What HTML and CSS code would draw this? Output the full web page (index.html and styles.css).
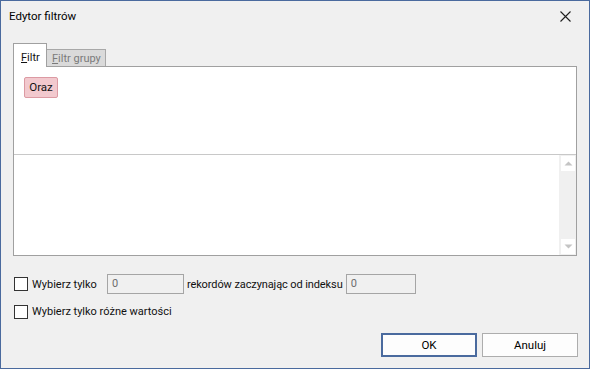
FILE: index.html
```html
<!DOCTYPE html>
<html lang="pl">
<head>
<meta charset="utf-8">
<title>Edytor filtrów</title>
<link rel="stylesheet" href="styles.css">
</head>
<body>
<div class="window">
  <div class="titlebar">
    <span class="title">Edytor filtrów</span>
    <span class="close">
      <svg width="11" height="11" viewBox="0 0 11 11"><path d="M0.5 0.5 L10.5 10.5 M10.5 0.5 L0.5 10.5" stroke="#1f1f1f" stroke-width="1.1" fill="none"/></svg>
    </span>
  </div>
  <div class="content">
    <div class="tabs">
      <div class="tab active"><u>F</u>iltr</div>
      <div class="tab inactive"><u>F</u>iltr grupy</div>
    </div>
    <div class="panel">
      <div class="top-area">
        <span class="chip">Oraz</span>
      </div>
      <div class="bottom-area">
        <div class="list"></div>
        <div class="scrollbar">
          <div class="arrow"><svg width="9" height="5" viewBox="0 0 9 5"><path d="M0.5 4.5 L4.5 0.5 L8.5 4.5 Z" fill="#c4c4c4"/></svg></div>
          <div class="arrow"><svg width="9" height="5" viewBox="0 0 9 5"><path d="M0.5 0.5 L4.5 4.5 L8.5 0.5 Z" fill="#c4c4c4"/></svg></div>
        </div>
      </div>
    </div>
    <div class="options">
      <div class="row row-1">
        <span class="checkbox"></span>
        <span class="label label-1">Wybierz tylko</span>
        <span class="input input-1">0</span>
        <span class="label label-2">rekordów zaczynając od indeksu</span>
        <span class="input input-2">0</span>
      </div>
      <div class="row row-2">
        <span class="checkbox"></span>
        <span class="label">Wybierz tylko różne wartości</span>
      </div>
    </div>
    <div class="buttons">
      <button class="btn default">OK</button>
      <button class="btn">Anuluj</button>
    </div>
  </div>
</div>
</body>
</html>
```
FILE: styles.css
```css
* { box-sizing: border-box; }
html, body { margin: 0; padding: 0; }
body {
  font-family: "Roboto", "Noto Sans", sans-serif;
  font-size: 11px;
  color: #111;
  background: #f0f0f0;
}
.window {
  width: 590px;
  height: 369px;
  border: 1px solid #4a6a9e;
  background: #f0f0f0;
  display: flex;
  flex-direction: column;
}
.titlebar {
  height: 30px;
  display: flex;
  align-items: center;
  justify-content: space-between;
  padding: 0 18px 0 8px;
}
.title { font-size: 11.5px; color: #000; }
.close { display: flex; align-items: center; height: 11px; }
.close svg { display: block; }
.content {
  flex: 1;
  display: flex;
  flex-direction: column;
  padding: 12px 12px 11px 12px;
}
.tabs {
  display: flex;
  align-items: flex-end;
  height: 23px;
}
.tab {
  line-height: 15px;
  white-space: nowrap;
}
.tab.active {
  height: 24px;
  width: 34px;
  padding: 6px 0 0 7px;
  background: #fff;
  border: 1px solid #a0a0a0;
  border-bottom: none;
  position: relative;
  z-index: 1;
  margin-bottom: -1px;
}
.tab.inactive {
  height: 17px;
  width: 59px;
  padding: 1px 0 0 5px;
  background: #dadada;
  border: 1px solid #a8a8a8;
  border-left: none;
  border-bottom: none;
  color: #7a7a7a;
}
.tab u { text-underline-offset: 1px; }
.panel {
  height: 190px;
  border: 1px solid #a0a0a0;
  background: #fff;
  display: flex;
  flex-direction: column;
}
.top-area {
  height: 88px;
  border-bottom: 1px solid #c8c8c8;
  padding: 10px 0 0 10px;
}
.chip {
  display: inline-block;
  height: 21px;
  width: 34px;
  line-height: 19px;
  text-align: center;
  background: #f2c9ce;
  border: 1px solid #dc9aa3;
  border-radius: 2px;
  font-size: 11.5px;
}
.bottom-area {
  flex: 1;
  display: flex;
}
.list { flex: 1; }
.scrollbar {
  width: 17px;
  background: #f0f0f0;
  display: flex;
  flex-direction: column;
  justify-content: space-between;
  padding: 1px 1px 1px 2px;
}
.arrow {
  width: 14px;
  height: 15px;
  background: #fff;
  display: flex;
  align-items: center;
  justify-content: center;
}
.arrow svg { display: block; }
.options {
  margin-top: 18px;
  display: flex;
  flex-direction: column;
  gap: 11px;
}
.row {
  display: flex;
  align-items: center;
  white-space: nowrap;
}
.row-1 { height: 20px; }
.row-2 { height: 13px; }
.checkbox {
  width: 14px;
  height: 14px;
  border: 1px solid #333;
  background: #fff;
  margin: 0 4px 0 1px;
  flex: none;
}
.label-1 { margin-right: 10px; }
.label-2 { margin: 0 3px 0 3px; letter-spacing: -0.1px; }
.input {
  height: 20px;
  border: 1px solid #a5a5a5;
  background: #f0f0f0;
  color: #6d6d6d;
  padding: 0 0 0 4px;
  line-height: 18px;
  flex: none;
}
.input-1 { width: 77px; }
.input-2 { width: 70px; }
.buttons {
  margin-top: auto;
  display: flex;
  justify-content: flex-end;
  gap: 5px;
  margin-right: -1px;
}
.btn {
  width: 96px;
  height: 24px;
  font-family: inherit;
  font-size: 11.5px;
  color: #000;
  background: #fdfdfd;
  border: 1px solid #adadad;
  padding: 0;
  margin: 0;
}
.btn.default {
  border: 2px solid #4a6a9e;
}
```
